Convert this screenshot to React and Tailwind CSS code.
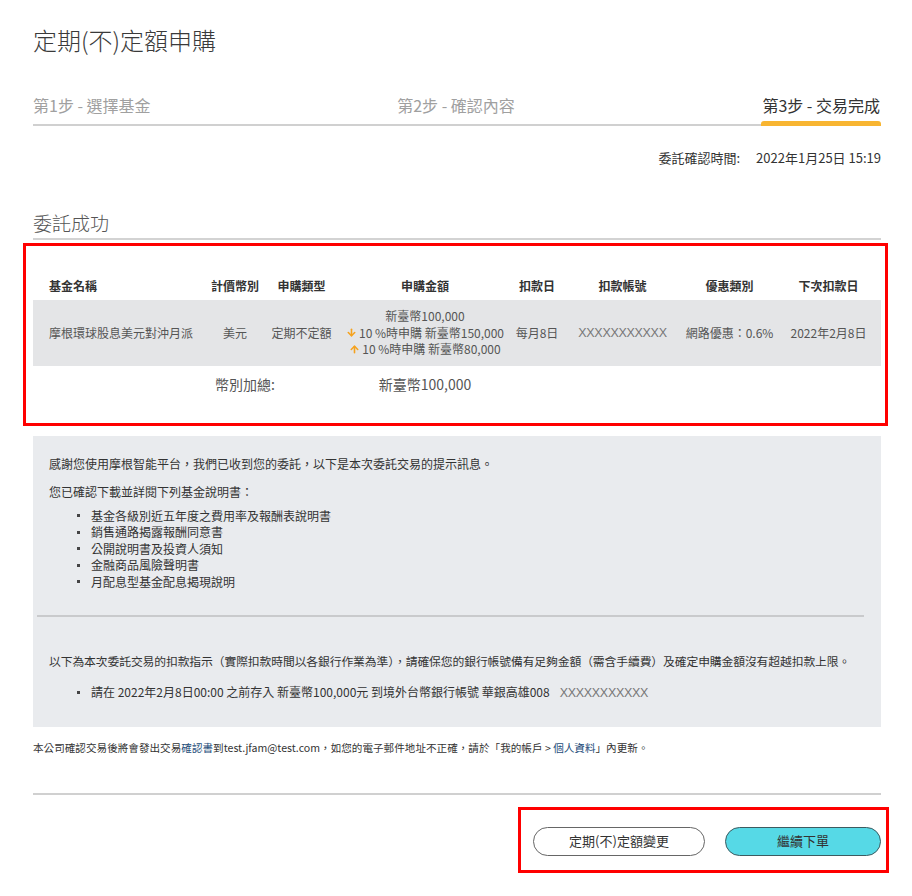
import React from 'react';
import { ArrowDown, ArrowUp } from 'lucide-react';

const font = { fontFamily: '"Noto Sans CJK TC", "Noto Sans", sans-serif' };

const cols = 'grid grid-cols-[172px_60px_73px_174px_50px_121px_93px_105px]';

const headers = ['基金名稱', '計價幣別', '申購類型', '申購金額', '扣款日', '扣款帳號', '優惠類別', '下次扣款日'];

const docs = [
  '基金各級別近五年度之費用率及報酬表說明書',
  '銷售通路揭露報酬同意書',
  '公開說明書及投資人須知',
  '金融商品風險聲明書',
  '月配息型基金配息揭現說明',
];

function Bullet({ children }) {
  return (
    <div className="flex items-center h-[16.5px]">
      <span className="ml-[28px] w-[3px] h-[3px] bg-[#444] shrink-0" />
      <span className="ml-[11px]">{children}</span>
    </div>
  );
}

export default function App() {
  return (
    <div style={font} className="w-[912px] min-h-[896px] bg-white pl-[33px] pr-[31px] pt-[24px] text-[#333]">
      <h1 className="text-[24px] leading-[32px] font-light text-[#3a3a3a]">定期(不)定額申購</h1>

      {/* steps */}
      <div className="mt-[37px] flex justify-between items-start border-b-2 border-[#d0d0d0] text-[16px] leading-[24px]">
        <div className="pb-[7px] text-[#a0a0a0]">第1步 - 選擇基金</div>
        <div className="pb-[7px] text-[#a0a0a0]">第2步 - 確認內容</div>
        <div className="flex flex-col">
          <div className="pb-[4px] px-[1px] text-[#333]">第3步 - 交易完成</div>
          <div className="h-[5px] -mb-[2px] rounded-t-[3px] bg-[#f8b531]" />
        </div>
      </div>

      <div className="mt-[22px] flex justify-end text-[13px] leading-[20px] text-[#333]">
        <span>委託確認時間:</span>
        <span className="ml-[16px]">2022年1月25日 15:19</span>
      </div>

      <h2 className="mt-[41px] text-[19px] leading-[28px] font-light text-[#555] border-b-2 border-[#d3d3d3] pb-[1px]">委託成功</h2>

      {/* order table */}
      <div className="mt-[3px] -ml-[10px] -mr-[7px] border-[3px] border-[#ff0000] pl-[7px] pr-[4px] pb-[29px]">
        <div className={`${cols} text-[12px] leading-[18px] font-bold text-[#333]`}>
          {headers.map((h, i) => (
            <div key={h} className={`pt-[31px] pb-[5px] ${i === 0 ? 'pl-[16px]' : 'text-center'}`}>{h}</div>
          ))}
        </div>
        <div className={`${cols} bg-[#e4e5e7] text-[12px] leading-[16.5px] text-[#555] py-[8px] items-center`}>
          <div className="pl-[16px]">摩根環球股息美元對沖月派</div>
          <div className="text-center">美元</div>
          <div className="text-center">定期不定額</div>
          <div className="flex flex-col items-center">
            <span>新臺幣100,000</span>
            <span className="flex items-center">
              <ArrowDown size={11} strokeWidth={3.5} className="text-[#f5a21e] mr-[2px]" />
              10 %時申購 新臺幣150,000
            </span>
            <span className="flex items-center">
              <ArrowUp size={11} strokeWidth={3.5} className="text-[#f5a21e] mr-[2px]" />
              10 %時申購 新臺幣80,000
            </span>
          </div>
          <div className="text-center">每月8日</div>
          <div className="text-center text-[12.5px] text-[#777] tracking-[-0.3px]" style={{ fontFamily: '"Liberation Sans", sans-serif' }}>XXXXXXXXXXX</div>
          <div className="text-center">網路優惠：0.6%</div>
          <div className="text-center">2022年2月8日</div>
        </div>
        <div className={`${cols} text-[14px] leading-[20px] text-[#555] pt-[8px]`}>
          <div />
          <div className="pl-[10px] whitespace-nowrap">幣別加總:</div>
          <div />
          <div className="text-center">新臺幣100,000</div>
        </div>
      </div>

      {/* info box */}
      <div className="mt-[10px] bg-[#e9ebee] text-[12px] leading-[18px] text-[#333] pt-[19px] pb-[26px]">
        <p className="pl-[16px]">感謝您使用摩根智能平台，我們已收到您的委託，以下是本次委託交易的提示訊息。</p>
        <p className="pl-[16px] mt-[10px]">您已確認下載並詳閱下列基金說明書：</p>
        <div className="mt-[7px] pl-[16px]">
          {docs.map((d) => (
            <Bullet key={d}>{d}</Bullet>
          ))}
        </div>
        <div className="mt-[25px] ml-[4px] mr-[17px] h-[2px] bg-[#c9cacc]" />
        <p className="pl-[16px] mt-[35px] text-[11.8px] tracking-[-0.1px]">
          以下為本次委託交易的扣款指示（實際扣款時間以各銀行作業為準），請確保您的銀行帳號備有足夠金額（需含手續費）及確定申購金額沒有超越扣款上限。
        </p>
        <div className="mt-[14px] pl-[16px]">
          <Bullet>
            請在 2022年2月8日00:00 之前存入 新臺幣100,000元 到境外台幣銀行帳號 華銀高雄008
            <span className="ml-[10px] text-[12.5px] text-[#777] tracking-[-0.3px]" style={{ fontFamily: '"Liberation Sans", sans-serif' }}>XXXXXXXXXXX</span>
          </Bullet>
        </div>
      </div>

      <p className="mt-[13px] text-[10.6px] leading-[16px] text-[#333]">
        本公司確認交易後將會發出交易<span className="text-[#1d4d7a]">確認書</span>到test.jfam@test.com，如您的電子郵件地址不正確，請於「我的帳戶 &gt; <span className="text-[#1d4d7a]">個人資料</span>」內更新。
      </p>

      <div className="mt-[37px] h-[2px] bg-[#d0d0d0]" />

      <div className="flex justify-end -mr-[8px] mt-[12px]">
        <div className="flex gap-[20px] border-[3px] border-[#ff0000] pl-[12px] pr-[5px] pt-[17px] pb-[14px]">
          <button className="w-[172px] h-[29px] rounded-full border-[1.5px] border-[#666] bg-white text-[13px] text-[#333]">
            定期(不)定額變更
          </button>
          <button className="w-[156px] h-[29px] rounded-full border-[1.5px] border-[#3d5b60] bg-[#56d9e6] text-[13px] text-[#333]">
            繼續下單
          </button>
        </div>
      </div>
    </div>
  );
}
